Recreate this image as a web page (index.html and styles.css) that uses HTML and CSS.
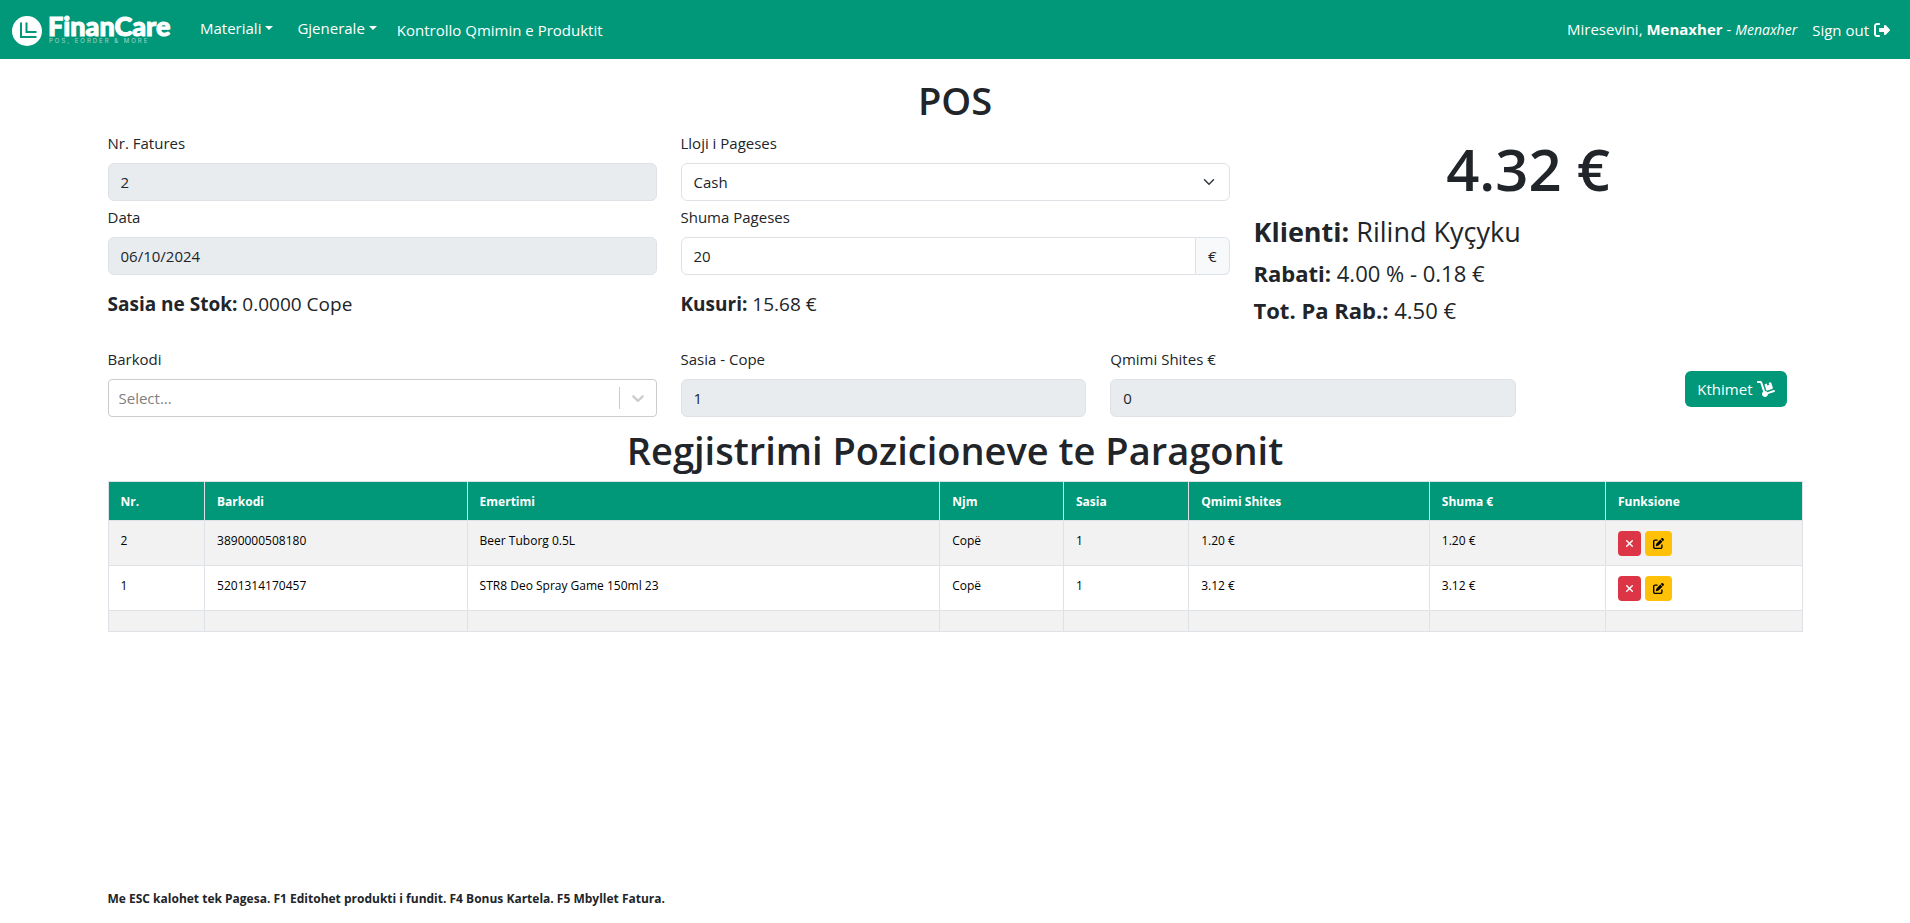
FILE: index.html
```html
<!DOCTYPE html>
<html lang="sq">
<head>
<meta charset="utf-8">
<meta name="viewport" content="width=device-width, initial-scale=1">
<title>FinanCare - POS</title>
<link rel="stylesheet" href="styles.css">
</head>
<body>
<header class="navbar">
  <a class="brand" href="#">
    <svg class="brand-mark" viewBox="0 0 30 30" aria-hidden="true">
      <circle cx="15" cy="15" r="15" fill="#fff"/>
      <path d="M9 6.500V21H24.500M14.500 6.500V16H24.500" fill="none" stroke="#009879" stroke-width="2"/>
    </svg>
    <span class="brand-text">
      <span class="brand-name">FinanCare</span>
      <span class="brand-tag">POS, EORDER &amp; MORE</span>
    </span>
  </a>
  <nav class="nav-main">
    <button class="nav-toggle" type="button">Materiali</button>
    <button class="nav-toggle" type="button">Gjenerale</button>
    <a class="nav-link" href="#">Kontrollo Qmimin e Produktit</a>
  </nav>
  <div class="nav-user">
    <span>Miresevini, <strong>Menaxher</strong> - <em class="role">Menaxher</em></span>
    <a class="nav-link sign-out" href="#">Sign out
      <svg class="icon-out" viewBox="0 0 512 512" aria-hidden="true"><path fill="currentColor" d="M377.900 105.900L500.700 228.700c7.200 7.200 11.300 17.100 11.300 27.300s-4.100 20.100-11.300 27.300L377.900 406.100c-6.400 6.400-15 9.900-24 9.900c-18.700 0-33.900-15.200-33.900-33.900l0-62.100-128 0c-17.700 0-32-14.300-32-32l0-64c0-17.700 14.300-32 32-32l128 0 0-62.100c0-18.700 15.200-33.900 33.900-33.900c9 0 17.600 3.600 24 9.900zM160 96L96 96c-17.700 0-32 14.300-32 32l0 256c0 17.700 14.300 32 32 32l64 0c17.700 0 32 14.300 32 32s-14.300 32-32 32l-64 0c-53 0-96-43-96-96L0 128C0 75 43 32 96 32l64 0c17.700 0 32 14.300 32 32s-14.300 32-32 32z"/></svg>
    </a>
  </div>
</header>

<main class="page">
  <h1 class="title">POS</h1>

  <div class="grid summary">
    <div class="col-4">
      <div class="field">
        <label for="invoice">Nr. Fatures</label>
        <input class="control" id="invoice" type="text" value="2" disabled>
      </div>
      <div class="field">
        <label for="date">Data</label>
        <input class="control" id="date" type="text" value="06/10/2024" disabled>
      </div>
      <p class="note"><strong>Sasia ne Stok:</strong> 0.0000 Cope</p>
    </div>
    <div class="col-4">
      <div class="field">
        <label for="payment">Lloji i Pageses</label>
        <div class="select-wrap">
          <select class="control" id="payment"><option>Cash</option></select>
          <svg class="select-arrow" viewBox="0 0 16 16" aria-hidden="true"><path fill="none" stroke="#343a40" stroke-linecap="round" stroke-linejoin="round" stroke-width="2" d="m2 5 6 6 6-6"/></svg>
        </div>
      </div>
      <div class="field">
        <label for="amount">Shuma Pageses</label>
        <div class="input-group">
          <input class="control" id="amount" type="text" value="20">
          <span class="addon">€</span>
        </div>
      </div>
      <p class="note"><strong>Kusuri:</strong> 15.68 €</p>
    </div>
    <div class="col-4 totals">
      <p class="total">4.32 €</p>
      <p class="client"><strong>Klienti:</strong> Rilind Kyçyku</p>
      <p class="line"><strong>Rabati:</strong> 4.00 % - 0.18 €</p>
      <p class="line"><strong>Tot. Pa Rab.:</strong> 4.50 €</p>
    </div>
  </div>

  <div class="grid entry">
    <div class="col-4 field">
      <label for="barcode">Barkodi</label>
      <div class="combo">
        <input class="combo-input" id="barcode" type="text" placeholder="Select...">
        <span class="combo-sep"></span>
        <svg class="combo-arrow" viewBox="0 0 20 20" aria-hidden="true"><path fill="#ccc" d="M4.516 7.548c0.436-0.446 1.043-0.481 1.576 0l3.908 3.747 3.908-3.747c0.533-0.481 1.141-0.446 1.574 0 0.436 0.445 0.408 1.197 0 1.615-0.406 0.418-4.695 4.502-4.695 4.502-0.217 0.223-0.502 0.335-0.787 0.335s-0.570-0.112-0.789-0.335c0 0-4.287-4.084-4.695-4.502s-0.436-1.170 0-1.615z"/></svg>
      </div>
    </div>
    <div class="col-3 field">
      <label for="qty">Sasia - Cope</label>
      <input class="control" id="qty" type="text" value="1" disabled>
    </div>
    <div class="col-3 field">
      <label for="price">Qmimi Shites €</label>
      <input class="control" id="price" type="text" value="0" disabled>
    </div>
    <div class="col-2 actions">
      <button class="btn-returns" type="button">Kthimet
        <svg class="icon-dolly" viewBox="0 0 576 512" aria-hidden="true"><path fill="currentColor" d="M0 32C0 14.300 14.300 0 32 0h72.900c27.500 0 52 17.600 60.700 43.800L257.700 320c30.100 .5 56.800 14.900 74 37l202.100-67.400c16.800-5.600 34.900 3.500 40.500 20.200s-3.500 34.900-20.200 40.500L352 417.700c-.9 52.200-43.500 94.300-96 94.300c-53 0-96-43-96-96c0-30.800 14.500-58.200 37-75.800L104.900 64H32C14.300 64 0 49.700 0 32zM244.800 134.500c-5.500-16.800 3.700-34.900 20.500-40.300L311 79.400l19.800 60.900 60.900-19.800L371.800 59.600l45.700-14.800c16.800-5.500 34.900 3.700 40.300 20.500l49.400 152.200c5.500 16.800-3.700 34.900-20.500 40.300L334.500 307.200c-16.800 5.500-34.900-3.700-40.300-20.500L244.800 134.500z"/></svg>
      </button>
    </div>
  </div>

  <h2 class="title">Regjistrimi Pozicioneve te Paragonit</h2>

  <table class="items">
    <colgroup>
      <col class="w-nr"><col class="w-code"><col class="w-name"><col class="w-unit"><col class="w-qty"><col class="w-price"><col class="w-sum"><col class="w-fn">
    </colgroup>
    <thead>
      <tr><th>Nr.</th><th>Barkodi</th><th>Emertimi</th><th>Njm</th><th>Sasia</th><th>Qmimi Shites</th><th>Shuma €</th><th>Funksione</th></tr>
    </thead>
    <tbody>
      <tr>
        <td>2</td><td>3890000508180</td><td>Beer Tuborg 0.5L</td><td>Copë</td><td>1</td><td>1.20 €</td><td>1.20 €</td>
        <td><div class="row-actions">
          <button class="btn-sm btn-danger" type="button" aria-label="Fshij"><svg class="icon-x" viewBox="32 96 320 320" aria-hidden="true"><path fill="currentColor" d="M342.600 150.600c12.500-12.500 12.500-32.800 0-45.300s-32.800-12.500-45.300 0L192 210.700 86.600 105.400c-12.500-12.500-32.800-12.500-45.300 0s-12.500 32.800 0 45.300L146.700 256 41.400 361.400c-12.500 12.500-12.500 32.800 0 45.300s32.800 12.500 45.300 0L192 301.300 297.400 406.600c12.500 12.500 32.800 12.500 45.300 0s12.500-32.800 0-45.300L237.300 256 342.600 150.600z"/></svg></button>
          <button class="btn-sm btn-warning" type="button" aria-label="Edito"><svg class="icon-edit" viewBox="0 0 512 512" aria-hidden="true"><path fill="currentColor" d="M471.600 21.700c-21.900-21.900-57.300-21.900-79.200 0L362.300 51.700l97.900 97.900 30.100-30.100c21.900-21.900 21.900-57.300 0-79.200L471.600 21.700zm-299.200 220c-6.100 6.100-10.800 13.600-13.500 21.900l-29.600 88.800c-2.900 8.600-.6 18.100 5.800 24.600s15.900 8.700 24.600 5.800l88.800-29.600c8.200-2.700 15.700-7.400 21.900-13.500L437.700 172.300 339.700 74.300 172.400 241.700zM96 64C43 64 0 107 0 160V416c0 53 43 96 96 96H352c53 0 96-43 96-96V320c0-17.700-14.300-32-32-32s-32 14.300-32 32v96c0 17.700-14.300 32-32 32H96c-17.700 0-32-14.300-32-32V160c0-17.700 14.300-32 32-32h96c17.700 0 32-14.300 32-32s-14.300-32-32-32H96z"/></svg></button>
        </div></td>
      </tr>
      <tr>
        <td>1</td><td>5201314170457</td><td>STR8 Deo Spray Game 150ml 23</td><td>Copë</td><td>1</td><td>3.12 €</td><td>3.12 €</td>
        <td><div class="row-actions">
          <button class="btn-sm btn-danger" type="button" aria-label="Fshij"><svg class="icon-x" viewBox="32 96 320 320" aria-hidden="true"><path fill="currentColor" d="M342.600 150.600c12.500-12.500 12.500-32.800 0-45.300s-32.800-12.500-45.300 0L192 210.700 86.600 105.400c-12.500-12.500-32.800-12.500-45.300 0s-12.500 32.800 0 45.300L146.700 256 41.400 361.400c-12.500 12.500-12.500 32.800 0 45.300s32.800 12.500 45.300 0L192 301.300 297.400 406.600c12.500 12.500 32.800 12.500 45.300 0s12.500-32.800 0-45.300L237.300 256 342.600 150.600z"/></svg></button>
          <button class="btn-sm btn-warning" type="button" aria-label="Edito"><svg class="icon-edit" viewBox="0 0 512 512" aria-hidden="true"><path fill="currentColor" d="M471.600 21.700c-21.900-21.900-57.300-21.900-79.200 0L362.300 51.700l97.900 97.900 30.100-30.100c21.900-21.900 21.900-57.300 0-79.200L471.600 21.700zm-299.200 220c-6.100 6.100-10.800 13.600-13.500 21.900l-29.600 88.800c-2.900 8.600-.6 18.100 5.800 24.600s15.900 8.700 24.600 5.800l88.800-29.600c8.200-2.700 15.700-7.400 21.900-13.500L437.700 172.300 339.700 74.300 172.400 241.700zM96 64C43 64 0 107 0 160V416c0 53 43 96 96 96H352c53 0 96-43 96-96V320c0-17.700-14.300-32-32-32s-32 14.300-32 32v96c0 17.700-14.300 32-32 32H96c-17.700 0-32-14.300-32-32V160c0-17.700 14.300-32 32-32h96c17.700 0 32-14.300 32-32s-14.300-32-32-32H96z"/></svg></button>
        </div></td>
      </tr>
      <tr><td></td><td></td><td></td><td></td><td></td><td></td><td></td><td></td></tr>
    </tbody>
  </table>

  <p class="hint">Me ESC kalohet tek Pagesa. F1 Editohet produkti i fundit. F4 Bonus Kartela. F5 Mbyllet Fatura.</p>
</main>
</body>
</html>
```
FILE: styles.css
```css
*, *::before, *::after { box-sizing: border-box; }

body {
  margin: 0;
  min-height: 100vh;
  display: flex;
  flex-direction: column;
  background: #fff;
  color: #212529;
  font: 15px/24px "Open Sans", "Noto Sans", sans-serif;
}

p, h1, h2 { margin: 0; }
strong { font-weight: 700; }
input, select, button { font: inherit; color: inherit; }

/* Top bar */
.navbar {
  display: flex;
  align-items: center;
  min-height: 59px;
  padding: 0 20px 0 12px;
  background: #009879;
  color: #fff;
}
.brand {
  display: flex;
  align-items: center;
  gap: 6px;
  margin-right: 20px;
  padding-top: 3px;
  color: #fff;
  text-decoration: none;
}
.brand-mark { width: 30px; height: 30px; }
.brand-text { display: flex; flex-direction: column; width: 132px; padding-bottom: 3px; }
.brand-name { font: 900 27px/20px Lato, sans-serif; -webkit-text-stroke: 1px #fff; }
.brand-tag { padding: 2px 0 0 1px; font: 6px/6px Inter, sans-serif; letter-spacing: 2px; white-space: nowrap; opacity: 0.6; }
.nav-main { display: flex; align-items: center; }
.nav-toggle {
  display: flex;
  align-items: center;
  gap: 4px;
  margin-right: 24px;
  padding: 0 0 4px;
  border: 0;
  background: none;
}
.nav-toggle + .nav-toggle { margin-right: 20px; }
.nav-toggle::after {
  content: "";
  border: 4px solid transparent;
  border-top-color: currentColor;
  border-bottom: 0;
}
.nav-link { color: #fff; text-decoration: none; }
.nav-user { display: flex; align-items: center; gap: 15px; margin-left: auto; }
.role { font-size: 14px; }
.sign-out { display: flex; align-items: center; gap: 5px; }
.icon-out { width: 16px; height: 16px; }

/* Page */
.page {
  flex: 1;
  display: flex;
  flex-direction: column;
  width: 90%;
  margin: 0 auto;
  padding: 16px 12px 12px;
}
.title {
  padding-top: 2px;
  margin-bottom: 8px;
  font-size: 38px;
  line-height: 46px;
  font-weight: 600;
  text-align: center;
}
.grid {
  display: grid;
  grid-template-columns: repeat(12, 1fr);
  column-gap: 24px;
}
.col-4 { grid-column: span 4; }
.col-3 { grid-column: span 3; }
.col-2 { grid-column: span 2; }

/* Fields */
.field { display: flex; flex-direction: column; gap: 8px; }
.summary .field { margin-bottom: 4px; }
.control {
  width: 100%;
  height: 38px;
  padding: 6px 12px;
  border: 1px solid #dee2e6;
  border-radius: 6px;
  background: #fff;
  color: #212529;
}
.control:disabled { background: #e9ecef; opacity: 1; }
.select-wrap { display: grid; align-items: center; }
.select-wrap > * { grid-area: 1 / 1; }
.select-wrap .control { appearance: none; }
.select-arrow { width: 16px; height: 12px; margin-right: 13px; justify-self: end; pointer-events: none; }
.input-group { display: flex; }
.input-group .control { border-radius: 6px 0 0 6px; }
.addon {
  flex: none;
  padding: 6px 12px;
  border: 1px solid #dee2e6;
  border-left: 0;
  border-radius: 0 6px 6px 0;
  background: #f8f9fa;
}
.note { padding-top: 13px; font-size: 19px; font-weight: 500; }

/* Totals */
.total {
  padding-top: 2px;
  font-size: 58px;
  line-height: 72px;
  font-weight: 600;
  text-align: center;
}
.client { margin: 9px 0 9px; font-size: 27px; line-height: 36px; }
.line { margin-bottom: 8px; font-size: 22px; line-height: 29px; }

/* Entry row */
.entry { margin: 14px 0 8px; }
.combo {
  display: flex;
  align-items: center;
  height: 38px;
  border: 1px solid #ccc;
  border-radius: 4px;
}
.combo-input {
  flex: 1;
  min-width: 0;
  padding: 0 10px;
  border: 0;
  background: none;
  outline: 0;
}
.combo-input::placeholder { color: #808080; opacity: 1; }
.combo-sep { width: 1px; height: 22px; background: #ccc; }
.combo-arrow { width: 20px; height: 20px; margin: 0 8px; }
.actions { display: flex; justify-content: flex-end; align-items: center; padding-right: 16px; }
.btn-returns {
  display: flex;
  align-items: center;
  gap: 4px;
  margin-top: 14px;
  padding: 6px 12px;
  border: 0;
  border-radius: 6px;
  background: #009879;
  color: #fff;
}
.icon-dolly { width: 18px; height: 16px; }

/* Items table */
.items {
  width: 100%;
  table-layout: fixed;
  border-collapse: collapse;
  color: #000;
  font-size: 12px;
  line-height: 18px;
}
.items th, .items td {
  padding: 11px 12px 9px;
  border: 1px solid #dee2e6;
  text-align: left;
  vertical-align: top;
}
.items td:last-child { padding: 10px 12px 9px; }
.items th { background: #009879; color: #fff; font-weight: 700; }
.items tbody tr:nth-child(odd) { background: #f2f2f2; }
.w-nr { width: 5.7%; }
.w-code { width: 15.5%; }
.w-name { width: 27.9%; }
.w-unit { width: 7.3%; }
.w-qty { width: 7.4%; }
.w-price { width: 14.2%; }
.w-sum { width: 10.4%; }
.w-fn { width: 11.6%; }
.row-actions { display: flex; gap: 4px; }
.btn-sm {
  display: flex;
  align-items: center;
  justify-content: center;
  height: 25px;
  padding: 0 8px;
  border: 0;
  border-radius: 4px;
}
.btn-danger { background: #dc3545; color: #fff; }
.btn-warning { background: #ffc107; color: #000; }
.icon-x { width: 7px; height: 7px; }
.icon-edit { width: 11px; height: 11px; }

.hint { margin-top: auto; font-size: 12px; font-weight: 700; }
```
